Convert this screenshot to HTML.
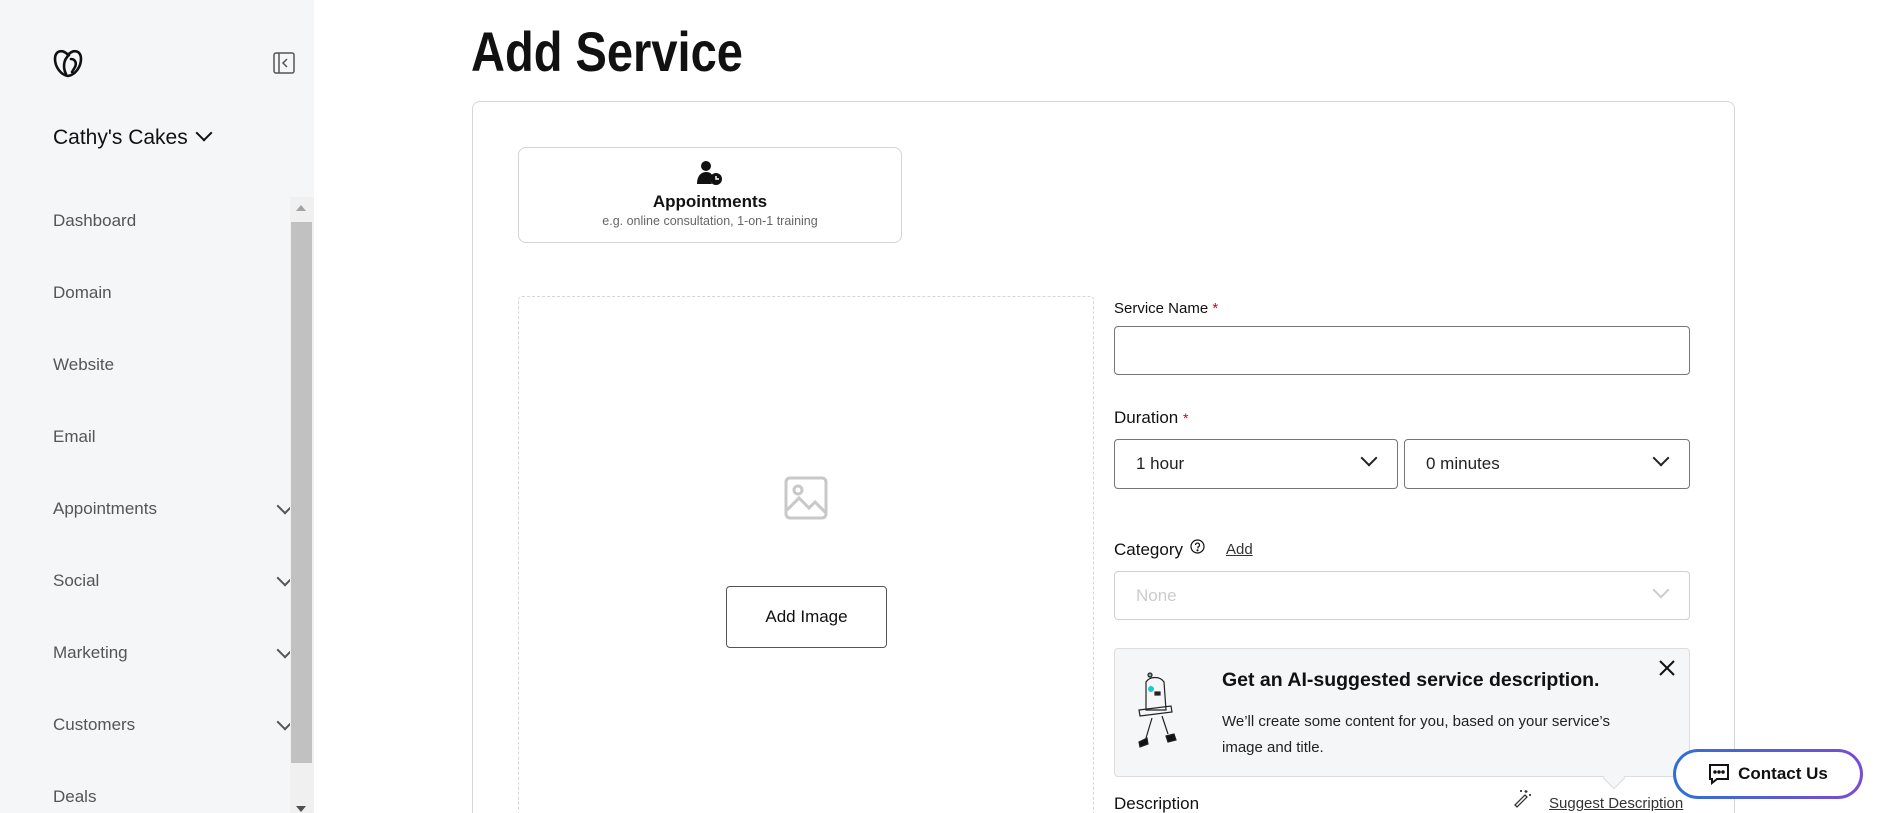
<!DOCTYPE html>
<html style="width:1882px;height:813px;overflow:hidden"><head><style>
*{box-sizing:border-box;margin:0;padding:0}
body{width:1882px;height:813px;overflow:hidden;background:#fff;font-family:"Liberation Sans",sans-serif;position:relative;color:#111}
#wrap{position:absolute;left:0;top:0;width:1882px;height:813px;overflow:hidden}
.a{position:absolute}
#side{left:0;top:0;width:314px;height:813px;background:#f5f6f8}
.nav{left:53px;font-size:17px;color:#555;line-height:20px}
.chev{left:279px;width:12px;height:12px;border-right:2px solid #555;border-bottom:2px solid #555;transform:rotate(45deg)}
.lbl{font-size:15.5px;color:#111}
.star{color:#d0021b}
.box{border:1px solid #767676;border-radius:4px;background:#fff}
.sel{font-size:17px;color:#222;padding-left:21px;display:flex;align-items:center}
.dch{width:12px;height:12px;border-right:2px solid #222;border-bottom:2px solid #222;transform:rotate(45deg);position:absolute;right:22px;top:12px}
</style></head><body><div id="wrap">
<div id="side" class="a"></div>
<svg class="a" style="left:52px;top:47px" width="32" height="32" viewBox="0 0 32 32" fill="none" stroke="#111" stroke-width="2.6" stroke-linecap="round"><path d="M16 8C11 2 3 3 3 12c0 8 6 16 13 17 7-1 13-9 13-17 0-9-8-10-13-4"/><path d="M14 27c-3-6-3-14 3-19M19 12c4 0 6 4 4 8l-3 5"/></svg>
<svg class="a" style="left:273px;top:52px" width="22" height="22" viewBox="0 0 22 22" fill="none" stroke="#555" stroke-width="1.5"><rect x="1" y="1" width="20" height="20" rx="2"/><path d="M6 1v20M14 7l-4 4 4 4"/></svg>
<div class="a" style="left:53px;top:126px;font-size:21px;color:#111">Cathy's Cakes</div>
<div class="a" style="left:198px;top:127px;width:12px;height:12px;border-right:2px solid #111;border-bottom:2px solid #111;transform:rotate(45deg)"></div>
<div class="a nav" style="top:211px">Dashboard</div>
<div class="a nav" style="top:283px">Domain</div>
<div class="a nav" style="top:355px">Website</div>
<div class="a nav" style="top:427px">Email</div>
<div class="a nav" style="top:499px">Appointments</div>
<div class="a nav" style="top:571px">Social</div>
<div class="a nav" style="top:643px">Marketing</div>
<div class="a nav" style="top:715px">Customers</div>
<div class="a nav" style="top:787px">Deals</div>
<div class="a chev" style="top:500px"></div><div class="a chev" style="top:572px"></div><div class="a chev" style="top:644px"></div><div class="a chev" style="top:716px"></div>
<div class="a" style="left:290px;top:197px;width:24px;height:616px;background:#f0f0f0"></div>
<div class="a" style="left:291px;top:222px;width:21px;height:541px;background:#c1c1c1"></div>
<div class="a" style="left:296px;top:205px;border:5px solid transparent;border-bottom:6px solid #a3a3a3;border-top:0"></div>
<div class="a" style="left:296px;top:806px;border:5px solid transparent;border-top:6px solid #505050;border-bottom:0"></div>

<div class="a" style="left:471px;top:19px;font-size:56px;font-weight:bold;color:#111;transform:scaleX(0.84);transform-origin:left top;white-space:nowrap">Add Service</div>
<div class="a" style="left:472px;top:101px;width:1263px;height:712px;border:1px solid #d6d6d6;border-bottom:0;border-radius:8px 8px 0 0"></div>
<div class="a" style="left:518px;top:147px;width:384px;height:96px;border:1px solid #d4d4d4;border-radius:8px"></div>
<svg class="a" style="left:696px;top:160px" width="28" height="26" viewBox="0 0 28 26"><circle cx="10" cy="6" r="5" fill="#111"/><path d="M1 24c0-8 4-12 9-12 3 0 5 1 6 3a7 7 0 0 0 0 9z" fill="#111"/><circle cx="20" cy="19" r="6" fill="#111"/><path d="M20 16v3h3" stroke="#fff" stroke-width="1.5" fill="none"/></svg>
<div class="a" style="left:518px;top:192px;width:384px;text-align:center;font-size:17px;font-weight:bold">Appointments</div>
<div class="a" style="left:518px;top:214px;width:384px;text-align:center;font-size:12.5px;color:#666">e.g. online consultation, 1-on-1 training</div>

<div class="a" style="left:518px;top:296px;width:576px;height:517px;border:1px dashed #d6d6d6;border-bottom:0;border-radius:4px 4px 0 0"></div>
<svg class="a" style="left:784px;top:476px" width="44" height="44" viewBox="0 0 44 44" fill="none" stroke="#c8c8c8" stroke-width="3"><rect x="2" y="2" width="40" height="40" rx="4"/><circle cx="14" cy="14" r="4"/><path d="M3 34l12-12 10 10 6-6 11 11"/></svg>
<div class="a" style="left:726px;top:586px;width:161px;height:62px;border:1px solid #555;border-radius:4px;font-size:17px;display:flex;align-items:center;justify-content:center">Add Image</div>

<div class="a lbl" style="left:1114px;top:300px;font-size:15px">Service Name <span class="star">*</span></div>
<div class="a box" style="left:1114px;top:326px;width:576px;height:49px"></div>
<div class="a lbl" style="left:1114px;top:408px;font-size:17px">Duration <span class="star" style="font-size:14px">*</span></div>
<div class="a box sel" style="left:1114px;top:439px;width:284px;height:50px">1 hour<div class="dch"></div></div>
<div class="a box sel" style="left:1404px;top:439px;width:286px;height:50px">0 minutes<div class="dch"></div></div>
<div class="a lbl" style="left:1114px;top:540px;font-size:17px">Category</div>
<svg class="a" style="left:1190px;top:539px" width="15" height="15" viewBox="0 0 15 15" fill="none" stroke="#111" stroke-width="1.2"><circle cx="7.5" cy="7.5" r="6.5"/><path d="M5.5 6a2 2 0 1 1 2.5 2v1.5"/><circle cx="7.5" cy="11.3" r=".5" fill="#111"/></svg>
<div class="a" style="left:1226px;top:541px;font-size:15px;text-decoration:underline;color:#333">Add</div>
<div class="a box sel" style="left:1114px;top:571px;width:576px;height:49px;border-color:#d0d0d0;color:#ccc">None<div class="dch" style="border-color:#ccc"></div></div>

<div class="a" style="left:1114px;top:648px;width:576px;height:129px;background:#f5f6f8;border:1px solid #ddd;border-radius:4px"></div>
<div class="a" style="left:1606px;top:770px;width:16px;height:16px;background:#f5f6f8;border-right:1px solid #ddd;border-bottom:1px solid #ddd;transform:rotate(45deg)"></div>
<svg class="a" style="left:1136px;top:672px" width="60" height="80" viewBox="0 0 60 80" fill="none" stroke="#222" stroke-width="1.2"><circle cx="14" cy="3" r="2" fill="#8aa"/><path d="M10 10c4-6 14-6 18 0l2 28H10z"/><circle cx="15" cy="17" r="3" fill="#1bc9d0" stroke="none"/><rect x="19" y="20" width="5" height="3" fill="#222"/><path d="M3 38l32-4 1 6-32 4z"/><path d="M16 46l-6 20M26 44l6 18"/><path d="M3 70l8-4 1 6-8 3z M30 64l8-2 2 6-8 2z" fill="#111"/></svg>
<div class="a" style="left:1222px;top:669px;font-size:19.5px;font-weight:bold;color:#111">Get an AI-suggested service description.</div>
<div class="a" style="left:1222px;top:709px;font-size:15px;line-height:26px;color:#222;width:420px">We’ll create some content for you, based on your service’s image and title.</div>
<svg class="a" style="left:1658px;top:659px" width="18" height="18" viewBox="0 0 18 18" stroke="#111" stroke-width="2"><path d="M2 2l14 14M16 2L2 16"/></svg>

<div class="a" style="left:1114px;top:795px;font-size:17px;line-height:18px">Description</div>
<svg class="a" style="left:1512px;top:788px" width="20" height="20" viewBox="0 0 20 20" fill="none" stroke="#333" stroke-width="1.3"><path d="M3 17L13 7l2 2L5 19zM14 2v3M12.5 3.5h3M18 6v2M17 7h2M9 2v2M8 3h2"/></svg>
<div class="a" style="left:1549px;top:795px;font-size:15px;line-height:17px;text-decoration:underline;color:#333">Suggest Description</div>

<div class="a" style="left:1673px;top:749px;width:190px;height:50px;border-radius:25px;background:linear-gradient(90deg,#2f6fd6,#7a4cd2);padding:3px"><div style="width:100%;height:100%;background:#fff;border-radius:22px;display:flex;align-items:center;justify-content:center;font-size:17px;font-weight:bold;color:#111;gap:8px"><svg width="22" height="22" viewBox="0 0 22 22" fill="none" stroke="#111" stroke-width="2"><path d="M2 2h18v14H9l-5 4v-4H2z"/><circle cx="7" cy="9" r=".8" fill="#111"/><circle cx="11" cy="9" r=".8" fill="#111"/><circle cx="15" cy="9" r=".8" fill="#111"/></svg>Contact Us</div></div>
</div></body></html>
